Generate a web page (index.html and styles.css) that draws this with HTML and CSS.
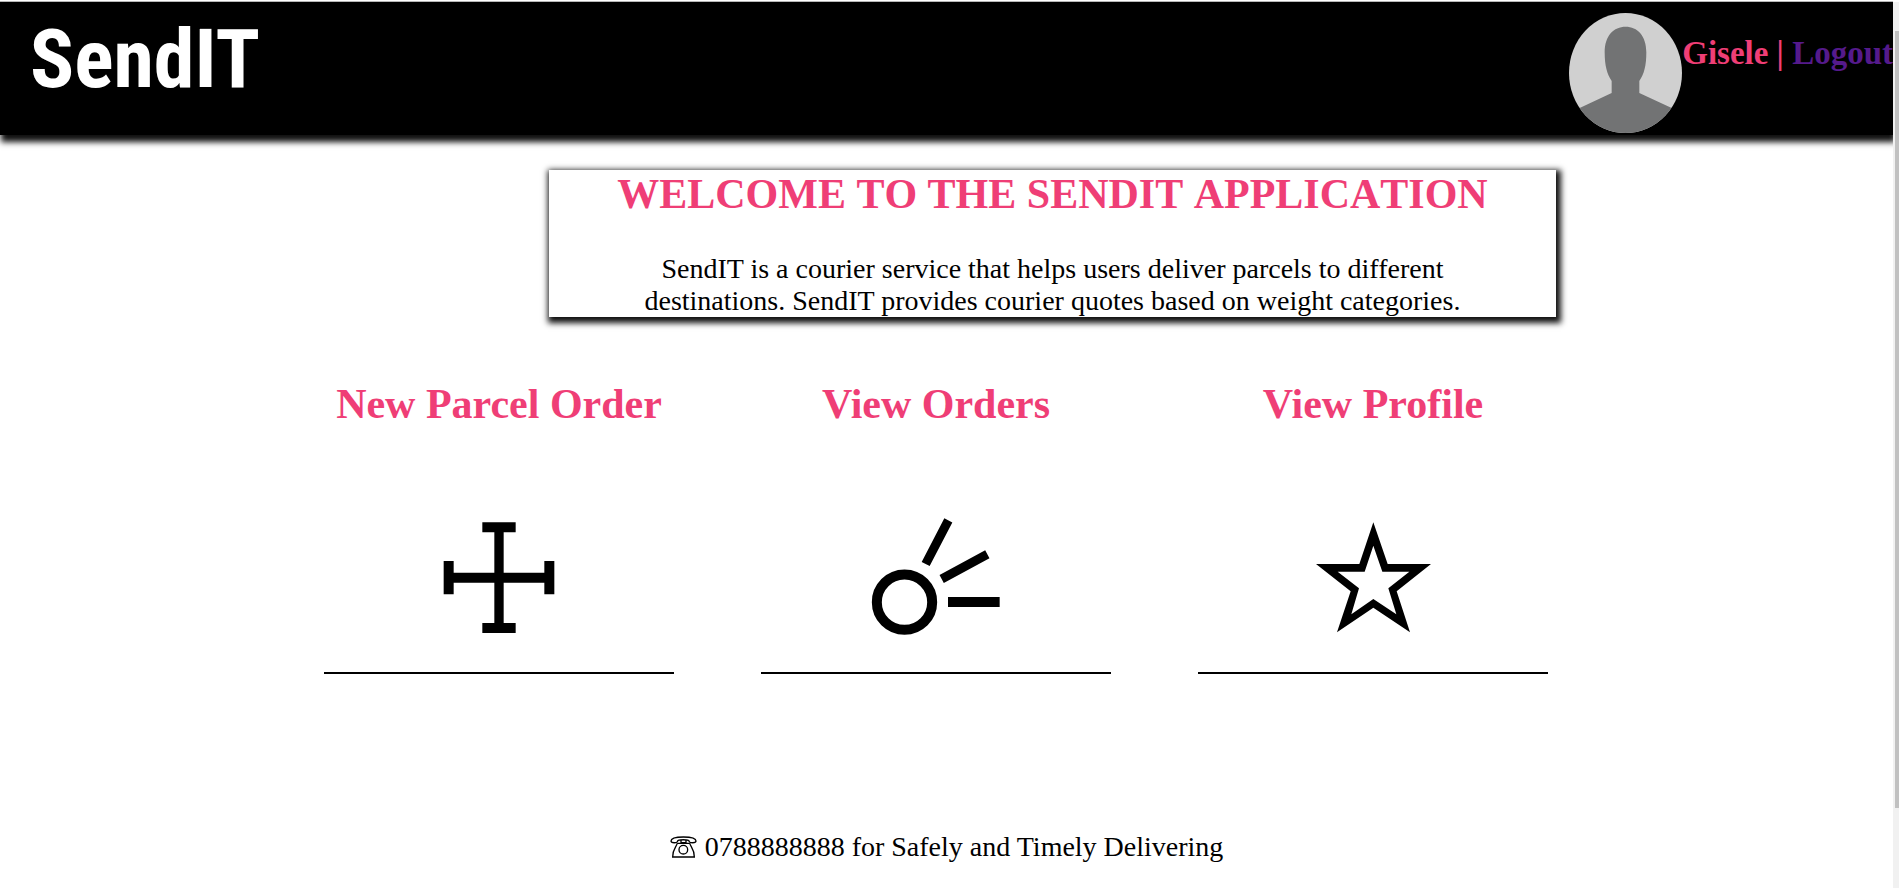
FILE: index.html
```html
<!DOCTYPE html>
<html lang="en">
<head>
<meta charset="utf-8">
<title>SendIT</title>
<link rel="stylesheet" href="styles.css">
</head>
<body>
<div class="page">
  <header class="header">
    <div class="logo">SendIT</div>
    <div class="account">
      <svg class="avatar" viewBox="0 0 339 360" role="img" aria-label="Profile photo">
        <defs><clipPath id="oval"><ellipse cx="169.500" cy="180" rx="169.500" ry="180"/></clipPath></defs>
        <g clip-path="url(#oval)">
          <rect width="339" height="360" fill="#d0d0d0"/>
          <path fill="#727374" d="M170 41C205 41 232 68 232 118C232 158 225 184 211 204V240L308 285L339 310V360H0V310L32 285L128 240V204C114 184 107 158 107 118C107 68 134 41 170 41Z"/>
        </g>
      </svg>
      <div class="user">Gisele | <a class="logout" href="#">Logout</a></div>
    </div>
  </header>
  <main>
    <section class="welcome">
      <h1 class="title">WELCOME TO THE SENDIT APPLICATION</h1>
      <p class="intro">SendIT is a courier service that helps users deliver parcels to different destinations. SendIT provides courier quotes based on weight categories.</p>
    </section>
    <nav class="cards">
      <a class="card" href="#">
        <h2 class="title">New Parcel Order</h2>
        <svg class="icon" viewBox="399 471 396 360" aria-hidden="true"><path d="M547 487H647V517H611V638H733V603H763V703H733V668H611V789H647V819H547V789H583V668H461V703H431V603H461V638H583V517H547Z"/></svg>
      </a>
      <a class="card" href="#">
        <h2 class="title">View Orders</h2>
        <svg class="icon" viewBox="390 471 396 360" aria-hidden="true"><g fill="none" stroke="#000"><circle cx="493.500" cy="726.500" r="83" stroke-width="30"/><path stroke-width="27" d="M625 481L557 612M742 583L605 657"/><path stroke-width="30" d="M624 726H779"/></g></svg>
      </a>
      <a class="card" href="#">
        <h2 class="title">View Profile</h2>
        <svg class="icon" viewBox="381 471 396 360" aria-hidden="true"><path fill-rule="evenodd" d="M580 487L623 612H753L650 694L690 817L580 743L471 817L512 694L408 612H538ZM580 557L554 635H473L537 685L514 763L580 717L649 763L625 685L688 635H607Z"/></svg>
      </a>
    </nav>
  </main>
  <footer class="footer">
    <svg class="phone" viewBox="0 0 81 66" role="img" aria-label="Phone"><g fill="none" stroke="#000" stroke-width="4"><path d="M3 15C3 7 18 3 40 3S78 7 78 15C78 22 58 22 57 15C56 10 24 10 23 15C22 22 3 22 3 15Z"/><path d="M22 21C20 33 8 38 8 63H73C73 38 61 33 59 21"/><path d="M33 11V20H48V11M22 22H59"/><circle cx="40" cy="41" r="13"/></g></svg>
    <span>0788888888 for Safely and Timely Delivering</span>
  </footer>
</div>
<div class="track"><div class="thumb"></div></div>
</body>
</html>
```
FILE: styles.css
```css
* { box-sizing: border-box; }
body {
  margin: 0;
  display: flex;
  min-height: 100vh;
  background: #fff;
  color: #000;
  font: 28px/32px "Liberation Serif", serif;
}
.page {
  flex: 1;
  margin-top: 1px;
  border-top: 1px solid #b6b6b6;
  overflow: hidden;
}
.header {
  display: flex;
  justify-content: space-between;
  height: 133px;
  padding: 11px 0 0 30px;
  background: #000;
  box-shadow: 2px 6px 6px 1px #111;
}
.logo {
  color: #fff;
  font: bold 82px/92px "Liberation Sans Narrow", "Roboto Condensed", sans-serif;
}
.account {
  display: flex;
}
.avatar {
  width: 113px;
  height: 120px;
}
.user {
  padding-top: 22px;
  color: #ef3e76;
  font-size: 33px;
  font-weight: bold;
  line-height: 36px;
}
.logout {
  color: #551a8b;
  text-decoration: none;
}
.welcome {
  width: 1007px;
  margin: 35px 0 0 29%;
  padding: 0 64px;
  text-align: center;
  box-shadow: 2px 3px 6px 3px #111;
}
.title {
  margin: 0;
  color: #ef3e76;
  font-size: 42px;
  line-height: 48px;
  font-kerning: none;
}
.intro {
  margin: 35px 0 0;
}
.cards {
  display: flex;
  gap: 87px;
  margin: 63px 0 0 324px;
}
.card {
  width: 350px;
  border-bottom: 2px solid #000;
  color: #000;
  text-align: center;
  text-decoration: none;
}
.card .title {
  white-space: nowrap;
  font-kerning: auto;
}
.icon {
  display: block;
  width: 132px;
  height: 120px;
  margin: 89px auto 35px;
}
.footer {
  display: flex;
  justify-content: center;
  gap: 8px;
  padding: 157px 0 25px;
}
.phone {
  width: 27px;
  height: 22px;
  margin-top: 5px;
}
.track {
  width: 6px;
  margin-top: 2px;
  padding: 29px 0 0 2px;
  background: #f1f1f1;
}
.thumb {
  height: 777px;
  background: #c1c1c1;
}
```
